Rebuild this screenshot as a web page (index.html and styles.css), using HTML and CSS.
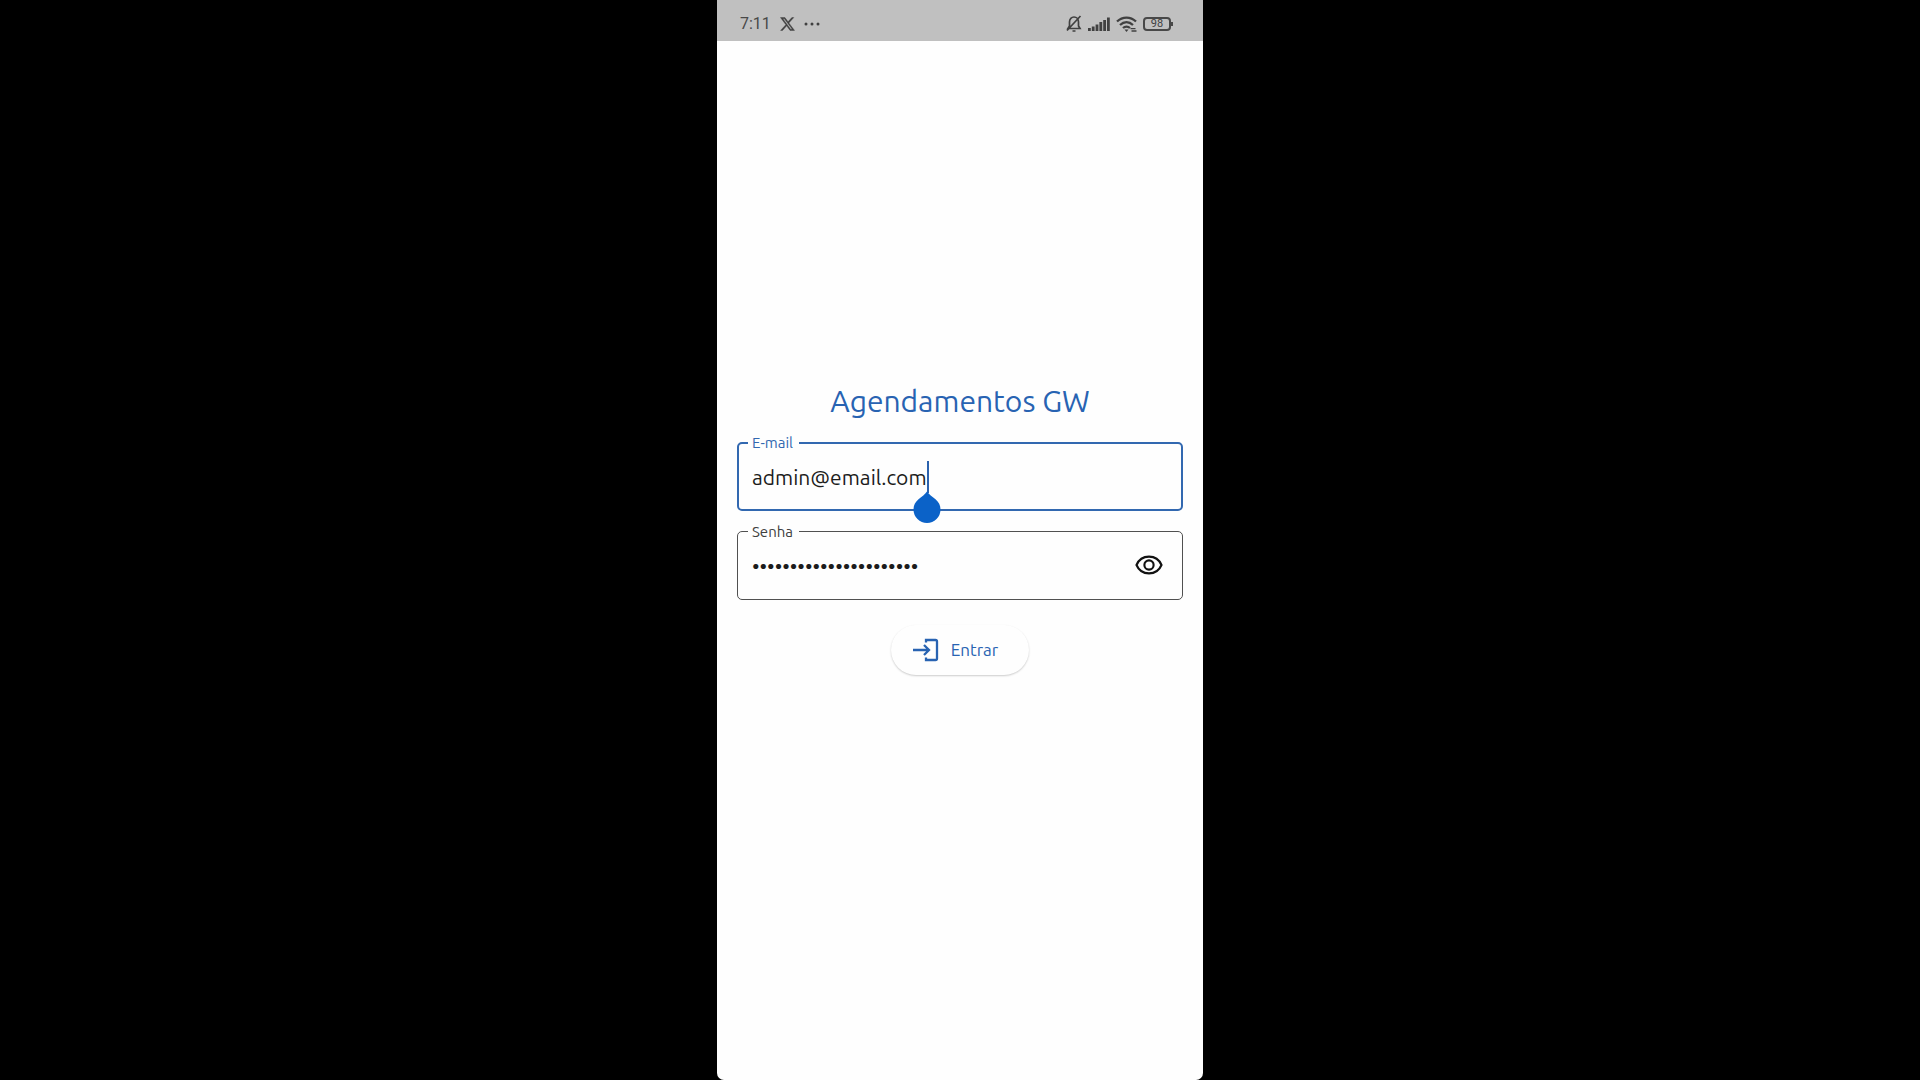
FILE: index.html
```html
<!DOCTYPE html>
<html lang="pt-BR">
<head>
<meta charset="utf-8">
<meta name="viewport" content="width=device-width, initial-scale=1">
<title>Agendamentos GW</title>
<link rel="stylesheet" href="styles.css">
</head>
<body>
<div class="phone">
  <header class="status">
    <div class="status-left">
      <span class="clock">7:11</span>
      <svg width="15" height="14" viewBox="0 0 24 24" fill="#404040" stroke="#404040" stroke-width=".8" aria-hidden="true"><path d="M0 1h7.600l5.300 7.200L19.500 1h3.200l-8.400 9.200L24 23h-7.600l-5.800-7.900L3.400 23H.2l9-9.800zM4 3l13.400 18h2.800L6.600 3z"/></svg>
      <svg width="16" height="4" viewBox="0 0 16 4" fill="#404040" aria-hidden="true"><circle cx="2" cy="2" r="1.500"/><circle cx="8" cy="2" r="1.500"/><circle cx="14" cy="2" r="1.500"/></svg>
    </div>
    <div class="status-right">
      <svg width="16" height="18" viewBox="0 0 16 18" fill="none" stroke="#404040" stroke-width="1.700" aria-hidden="true"><path d="M2 13.500h12l-1.500-2.500V7c0-3-2-5-4.500-5S3.500 4 3.500 7v4zM6.500 16h3M1 15.500L14.500 1"/></svg>
      <svg width="22" height="14" viewBox="0 0 22 14" fill="#404040" aria-hidden="true"><path d="M0 11h2.800v3H0zM3.800 9.500h2.800V14H3.800zM7.600 7.500h2.800V14H7.600zM11.400 5h2.800v9h-2.800zM15.200 3H18v11h-2.800zM19 .5h2.800V14H19z"/></svg>
      <svg width="21" height="16" viewBox="0 0 21 16" fill="none" stroke="#404040" stroke-width="2.300" aria-hidden="true"><path d="M1 5.500c5.500-5.300 13.500-5.300 19 0M4 9c4-3.700 9-3.700 13 0M7 12c2-1.800 5-1.800 7 0"/><path d="M8.500 13.500h4L10.500 16z" fill="#404040" stroke="none"/><path d="M14.500 12.700h5M15.500 15h5" stroke-width="1.300"/></svg>
      <span class="battery">98</span>
    </div>
  </header>

  <main class="login">
    <h1 class="title">Agendamentos GW</h1>
    <form class="form">
      <fieldset class="field field-active">
        <legend class="legend"><label for="email">E-mail</label></legend>
        <input class="input" id="email" type="email" value="admin@email.com">
        <svg class="cursor" width="28" height="62" viewBox="0 0 28 62" aria-hidden="true"><path d="M14 0h2v32h-2z" fill="#2b62ad"/><path d="M14 30.500C16 33.500 19 35.500 22.500 38.300C25.700 41 27.500 44.500 27.500 48.500a13.500 13.500 0 0 1-27 0c0-4 1.800-7.500 5-10.200C9 35.500 12 33.500 14 30.500z" fill="#0b62c8"/></svg>
      </fieldset>
      <fieldset class="field">
        <legend class="legend"><label for="password">Senha</label></legend>
        <input class="input" id="password" type="password" value="agendamentos-gw-senha1">
        <button class="reveal" type="button" aria-label="Mostrar senha">
          <svg width="30" height="30" viewBox="0 0 24 24" fill="none" stroke="#111" stroke-width="1.700" aria-hidden="true"><path d="M2 12C3.700 8 7.500 5.300 12 5.300S20.300 8 22 12c-1.700 4-5.500 6.700-10 6.700S3.700 16 2 12z"/><circle cx="12" cy="12" r="3.700"/></svg>
        </button>
      </fieldset>
      <button class="submit" type="submit">
        <svg width="26" height="24" viewBox="0 0 26 24" fill="none" stroke="#2863b2" stroke-width="2.300" aria-hidden="true"><path d="M13 4.500V2h9.500q1.500 0 1.500 1.500v17q0 1.500-1.500 1.500H13v-2.500M0 12h16M11 7l5 5-5 5"/></svg>
        Entrar
      </button>
    </form>
  </main>
</div>
</body>
</html>
```
FILE: styles.css
```css
* {
  box-sizing: border-box;
}

body {
  margin: 0;
  min-height: 100vh;
  display: flex;
  justify-content: center;
  background: #000;
  font-family: Ubuntu, "Noto Sans", sans-serif;
}

.phone {
  display: flex;
  flex-direction: column;
  min-height: 100vh;
  aspect-ratio: 9 / 20;
  background: #fefefe;
  border-radius: 0 0 7px 7px;
  overflow: hidden;
}

.status {
  display: flex;
  align-items: center;
  justify-content: space-between;
  padding: 15px 28px 8px 23px;
  background: #c0c0c0;
}

.status-left,
.status-right {
  display: flex;
  align-items: center;
  height: 18px;
}

.status-left {
  gap: 9px;
}

.status-right {
  gap: 6px;
}

.clock {
  font: 16px/18px Roboto, sans-serif;
  color: #484848;
}

.battery {
  position: relative;
  width: 28px;
  margin-right: 4px;
  border: 2px solid #484848;
  border-radius: 4px;
  font: 11px/10px Roboto, sans-serif;
  text-align: center;
  color: #404040;
}

.battery::after {
  content: "";
  position: absolute;
  top: 3px;
  right: -4px;
  width: 2px;
  height: 4px;
  background: #484848;
}

.login {
  flex: 1;
  display: flex;
  flex-direction: column;
  justify-content: center;
  gap: 12px;
  padding: 0 20px 66px;
}

.title {
  margin: 0;
  font-size: 30px;
  line-height: 40px;
  font-weight: 400;
  text-align: center;
  color: #2863b2;
}

.form {
  display: flex;
  flex-direction: column;
  gap: 11px;
}

.field {
  position: relative;
  display: flex;
  align-items: center;
  height: 78px;
  min-width: 0;
  margin: 0;
  padding: 4px 18px 0 10px;
  border: 1px solid #505050;
  border-radius: 5px;
  color: #404040;
}

.field-active {
  padding: 4px 17px 0 9px;
  border: 2px solid #3268b0;
  color: #3268b0;
}

.legend {
  padding: 0 6px 0 4px;
  font-size: 15px;
  line-height: 20px;
}

.input {
  flex: 1;
  min-width: 0;
  height: 40px;
  padding: 0 4px;
  border: 0;
  outline: 0;
  background: transparent;
  font-family: inherit;
  font-size: 21px;
  color: #1c1c1c;
}

.cursor {
  position: absolute;
  top: 8px;
  left: 174px;
}

.reveal {
  display: flex;
  padding: 0 0 2px;
  border: 0;
  background: transparent;
}

.submit {
  display: flex;
  align-items: center;
  align-self: center;
  gap: 12px;
  height: 50px;
  margin-top: 14px;
  padding: 0 31px 0 22px;
  border: 0;
  border-radius: 25px;
  background: #fefefe;
  box-shadow: 0 1px 2px rgba(0, 0, 0, 0.2);
  font-family: inherit;
  font-size: 17px;
  color: #2863b2;
}
```
